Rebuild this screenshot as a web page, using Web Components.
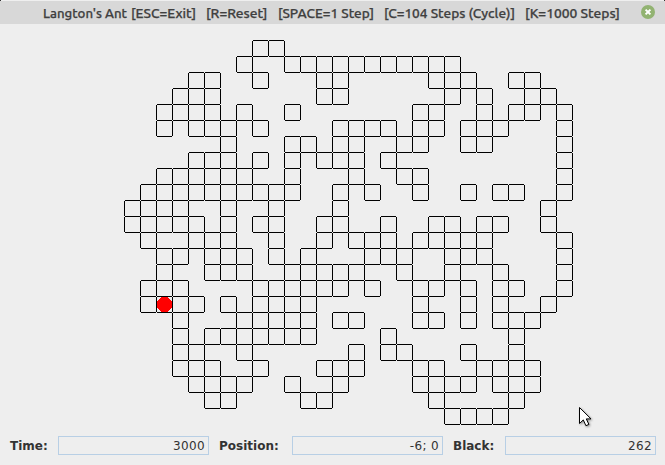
<!DOCTYPE html>
<html lang="en">
<head>
<meta charset="utf-8">
<title>Langton's Ant</title>
<style>html,body{margin:0;height:100%;background:#eee;overflow:hidden}</style>
</head>
<body>
<ant-window></ant-window>
<script>
class TitleBar extends HTMLElement {
  connectedCallback() {
    const parts = [
      ["Langton's Ant", 0, 84], ['[ESC=Exit]', 88, 65], ['[R=Reset]', 163, 61.5],
      ['[SPACE=1 Step]', 235, 96], ['[C=104 Steps (Cycle)]', 341, 131], ['[K=1000 Steps]', 482, 95]
    ];
    this.attachShadow({ mode: 'open' }).innerHTML = `
      <style>
        :host{display:flex;box-sizing:border-box;height:24px;padding:4px 9px 0 43px;background:linear-gradient(90deg,#333 1px,#efefef 1px 664px,#333 664px) 0 0/100% 1px no-repeat #d8d8d8;align-items:flex-start;justify-content:space-between;font:500 13px/18px Ubuntu,"Noto Sans","Open Sans",sans-serif}
        .t{display:block;width:580px;height:18px;overflow:visible}
        text{fill:#404040;stroke:#404040;stroke-width:.25px}
        .c{display:block;width:16px;height:16px}
      </style>
      <svg class="t">${parts.map(([s, x, w]) => `<text x="${x}" y="14" textLength="${w}" lengthAdjust="spacingAndGlyphs">${s}</text>`).join('')}</svg>
      <svg class="c" viewBox="0 0 16 16"><circle cx="8" cy="8" r="7" fill="#92b372"/><path d="M5.6 5.6L10.4 10.4M10.4 5.6L5.6 10.4" stroke="#fff" stroke-width="2"/></svg>`;
  }
}
class AntBoard extends HTMLElement {
  run(steps) {
    const black = new Set();
    let x = 0, y = 0, d = 0;
    for (let i = 0; i < steps; i++) {
      const k = x + ',' + y;
      if (black.has(k)) { black.delete(k); d = (d + 3) % 4; }
      else { black.add(k); d = (d + 1) % 4; }
      x += [0, 1, 0, -1][d];
      y += [-1, 0, 1, 0][d];
    }
    return { cells: [...black].map(k => k.split(',').map(Number)), x, y };
  }
  connectedCallback() {
    const ant = this.run(3000);
    // Cell edges stop one pixel short of each lattice corner.
    const edges = new Set();
    for (const [x, y] of ant.cells) {
      const a = 252 + 16 * x, b = 272 + 16 * y;
      for (const o of [0, 16]) {
        edges.add(`M${a + 1} ${b + o}h15v1h-15z`);
        edges.add(`M${a + o} ${b + 1}h1v15h-1z`);
      }
    }
    this.attachShadow({ mode: 'open' }).innerHTML = `
      <style>:host{display:block;height:404px}svg{display:block}</style>
      <svg width="665" height="404" shape-rendering="crispEdges"><path d="${[...edges].join('')}"/><circle cx="${260.5 + 16 * ant.x}" cy="${280.5 + 16 * ant.y}" r="7.9" fill="#f00"/></svg>`;
  }
}
class StatusField extends HTMLElement {
  connectedCallback() {
    this.attachShadow({ mode: 'open' }).innerHTML = `
      <style>
        :host{display:flex;align-items:center;color:#333;font:12px/17px "DejaVu Sans",sans-serif}
        b{flex:none;width:var(--label);padding-top:2px}
        span{box-sizing:border-box;flex:1;height:19px;line-height:19px;border:1px solid #b8cfe5;padding-right:3px;text-align:right;letter-spacing:.36px}
      </style><b>${this.getAttribute('label')}</b><span><slot></slot></span>`;
  }
}
class AntWindow extends HTMLElement {
  connectedCallback() {
    this.attachShadow({ mode: 'open' }).innerHTML = `
      <style>
        :host{display:flex;flex-direction:column;width:665px;height:465px;background:#eee}
        footer{display:grid;grid-template-columns:199px 224px 203px;gap:10px;padding:8px 0 0 10px}
        svg{position:absolute;left:578px;top:406px;filter:drop-shadow(1px 1px 1px #0006)}
      </style>
      <title-bar></title-bar>
      <ant-board></ant-board>
      <footer>
        <status-field label="Time:" style="--label:48px">3000</status-field>
        <status-field label="Position:" style="--label:73px">-6; 0</status-field>
        <status-field label="Black:" style="--label:52px">262</status-field>
      </footer>
      <svg width="16" height="24"><path d="M1.5 1.5V17.5L5.3 13.9L7.9 19.7L10.9 18.4L8.3 12.9H13z" fill="#fff" stroke="#000"/></svg>`;
  }
}
customElements.define('title-bar', TitleBar);
customElements.define('ant-board', AntBoard);
customElements.define('status-field', StatusField);
customElements.define('ant-window', AntWindow);
</script>
</body>
</html>
